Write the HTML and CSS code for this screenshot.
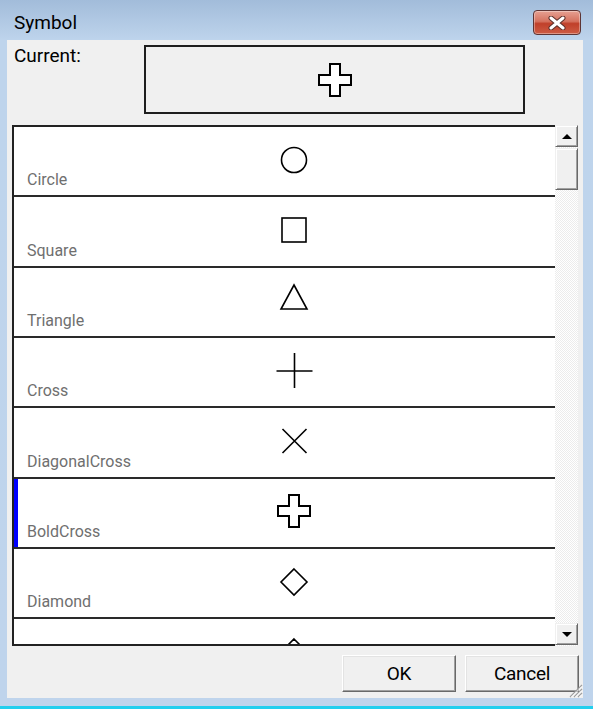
FILE: index.html
```html
<!DOCTYPE html>
<html lang="en">
<head>
<meta charset="UTF-8">
<title>Symbol</title>
<link rel="stylesheet" href="styles.css">
</head>
<body>
<div class="window">
    <div class="titlebar">
        <span class="title">Symbol</span>
        <button class="close" aria-label="Close">
            <svg width="20" height="14" viewBox="0 0 20 14">
                <path d="M4 2L16 12M16 2L4 12" stroke="#5a2f2a" stroke-width="5" stroke-linecap="round"/>
                <path d="M4 2L16 12M16 2L4 12" stroke="#fff" stroke-width="3" stroke-linecap="round"/>
            </svg>
        </button>
    </div>

    <div class="client">
        <div class="current">
            <span class="current-label">Current:</span>
            <div class="preview">
                <svg width="40" height="40" viewBox="0 0 40 40"><polygon class="shape" points="15,4 25,4 25,15 36,15 36,25 25,25 25,36 15,36 15,25 4,25 4,15 15,15"/></svg>
            </div>
        </div>

        <div class="list">
            <div class="rows">
                <div class="row">
                    <span class="label">Circle</span>
                    <svg class="icon" width="40" height="40" viewBox="0 0 40 40"><circle class="shape" cx="20" cy="20" r="12.5"/></svg>
                </div>
                <div class="row">
                    <span class="label">Square</span>
                    <svg class="icon" width="40" height="40" viewBox="0 0 40 40"><rect class="shape" x="8" y="8" width="24" height="24"/></svg>
                </div>
                <div class="row">
                    <span class="label">Triangle</span>
                    <svg class="icon" width="40" height="40" viewBox="0 0 40 40"><polygon class="shape" points="20,4 33,28 7,28"/></svg>
                </div>
                <div class="row">
                    <span class="label">Cross</span>
                    <svg class="icon" width="40" height="40" viewBox="0 0 40 40"><path class="shape" d="M2.5 20H38.5M20.5 2V37"/></svg>
                </div>
                <div class="row">
                    <span class="label">DiagonalCross</span>
                    <svg class="icon" width="40" height="40" viewBox="0 0 40 40"><path class="shape" d="M8.5 8L32.5 32M32.5 8L8.5 32"/></svg>
                </div>
                <div class="row selected">
                    <span class="label">BoldCross</span>
                    <svg class="icon" width="40" height="40" viewBox="0 0 40 40"><polygon class="shape" points="15,3 25,3 25,14 36,14 36,24 25,24 25,35 15,35 15,24 4,24 4,14 15,14"/></svg>
                </div>
                <div class="row">
                    <span class="label">Diamond</span>
                    <svg class="icon" width="40" height="40" viewBox="0 0 40 40"><polygon class="shape" points="20,7 33,20 20,33 7,20"/></svg>
                </div>
                <div class="row">
                    <span class="label"></span>
                    <svg class="icon" width="40" height="40" viewBox="0 0 40 40"><polygon class="shape" points="20,7 27,14 27,26 20,33 13,26 13,14"/></svg>
                </div>
            </div>
            <div class="scrollbar">
                <div class="sb-btn"><span class="arrow-up"></span></div>
                <div class="sb-thumb"></div>
                <div class="sb-track"></div>
                <div class="sb-btn"><span class="arrow-down"></span></div>
            </div>
        </div>

        <div class="buttons">
            <button class="btn">OK</button>
            <button class="btn">Cancel</button>
        </div>

        <svg class="grip" width="18" height="18" viewBox="0 0 18 18">
            <path d="M17 5L5 17M17 9L9 17M17 13L13 17" stroke="#a0a0a0" stroke-width="1.2"/>
            <path d="M17 6.5L6.5 17M17 10.5L10.5 17M17 14.5L14.5 17" stroke="#fff" stroke-width="1"/>
        </svg>
    </div>
</div>
</body>
</html>
```

FILE: styles.css
```css
body {
    margin: 0;
    font-family: Roboto, 'Open Sans', sans-serif;
}
.window {
    width: 593px;
    height: 706px;
    background: linear-gradient(#a2bcda, #bed4ec 40px, #bfd4ec);
    border-bottom: 3px solid #22cfee;
    display: flex;
    flex-direction: column;
}
.titlebar {
    height: 40px;
    display: flex;
    justify-content: space-between;
    align-items: flex-start;
    padding: 10px 12px 0 14px;
    box-sizing: border-box;
}
.title {
    font-size: 19px;
    line-height: 25px;
    color: #000;
}
.close {
    width: 48px;
    height: 25px;
    padding: 0;
    border: 1px solid #5d3434;
    border-radius: 4px;
    background: linear-gradient(#e6a092, #d5725f 45%, #c0402a 55%, #cd5c44);
    box-shadow: inset 0 0 0 1px rgba(255, 255, 255, 0.35);
    display: flex;
    justify-content: center;
    align-items: center;
}
.client {
    position: relative;
    margin: 0 10px 0 7px;
    height: 658px;
    background: #f0f0f0;
    display: flex;
    flex-direction: column;
}
.current {
    display: flex;
    align-items: flex-start;
    padding: 5px 0 0 7px;
}
.current-label {
    flex: 0 0 130px;
    font-size: 19px;
    line-height: 22px;
    color: #000;
}
.preview {
    width: 381px;
    height: 69px;
    box-sizing: border-box;
    border: 2px solid #1e1e1e;
    display: flex;
    justify-content: center;
    align-items: center;
}
.shape {
    fill: #fff;
    stroke: #000;
    stroke-width: 1.6;
}
.preview .shape {
    stroke-width: 2;
}
.list {
    display: flex;
    margin: 11px 0 0 5px;
    width: 566px;
    height: 521px;
}
.rows {
    width: 543px;
    height: 521px;
    box-sizing: border-box;
    border: 2px solid #222;
    border-right: none;
    background: #fff;
    overflow: hidden;
}
.row {
    height: 68.33px;
    border-bottom: 2px solid #2a2a2a;
    display: grid;
    grid-template-columns: 247px 40px;
    padding-left: 13px;
}
.row.selected {
    box-shadow: inset 4px 0 0 #0000ff;
}
.label {
    align-self: end;
    font-size: 16px;
    line-height: 18px;
    padding-bottom: 6px;
    color: #6f6f6f;
    white-space: nowrap;
}
.icon {
    margin-top: 13px;
}
.row:nth-child(6) .shape {
    stroke-width: 2;
}
.scrollbar {
    width: 23px;
    display: flex;
    flex-direction: column;
    background: repeating-conic-gradient(#ffffff 0 25%, #ececec 0 50%) 0 0 / 2px 2px;
}
.sb-btn, .sb-thumb {
    box-sizing: border-box;
    background: #f0f0f0;
    border: 1px solid;
    border-color: #f0f0f0 #696969 #696969 #f0f0f0;
    box-shadow: inset 1px 1px #fff, inset -1px -1px #a0a0a0;
}
.sb-btn {
    height: 22px;
    display: flex;
    justify-content: center;
    align-items: center;
}
.sb-thumb {
    height: 42px;
    margin-top: 1px;
}
.sb-track {
    flex: 1;
}
.sb-btn:last-child {
    margin-bottom: 1px;
}
.arrow-up, .arrow-down {
    width: 0;
    height: 0;
    border-left: 5px solid transparent;
    border-right: 5px solid transparent;
}
.arrow-up {
    border-bottom: 5px solid #000;
}
.arrow-down {
    border-top: 5px solid #000;
}
.buttons {
    display: flex;
    justify-content: flex-end;
    gap: 9px;
    margin-top: 9px;
    padding-right: 4px;
}
.btn {
    width: 114px;
    height: 37px;
    box-sizing: border-box;
    font-family: Roboto, sans-serif;
    font-size: 19px;
    letter-spacing: -0.3px;
    color: #000;
    background: #f0f0f0;
    border: 1px solid;
    border-color: #fff #696969 #696969 #fff;
    box-shadow: inset -1px -1px #a0a0a0, inset 1px 1px #e3e3e3;
    padding: 0;
}
.grip {
    position: absolute;
    right: 0;
    bottom: 0;
}
```
